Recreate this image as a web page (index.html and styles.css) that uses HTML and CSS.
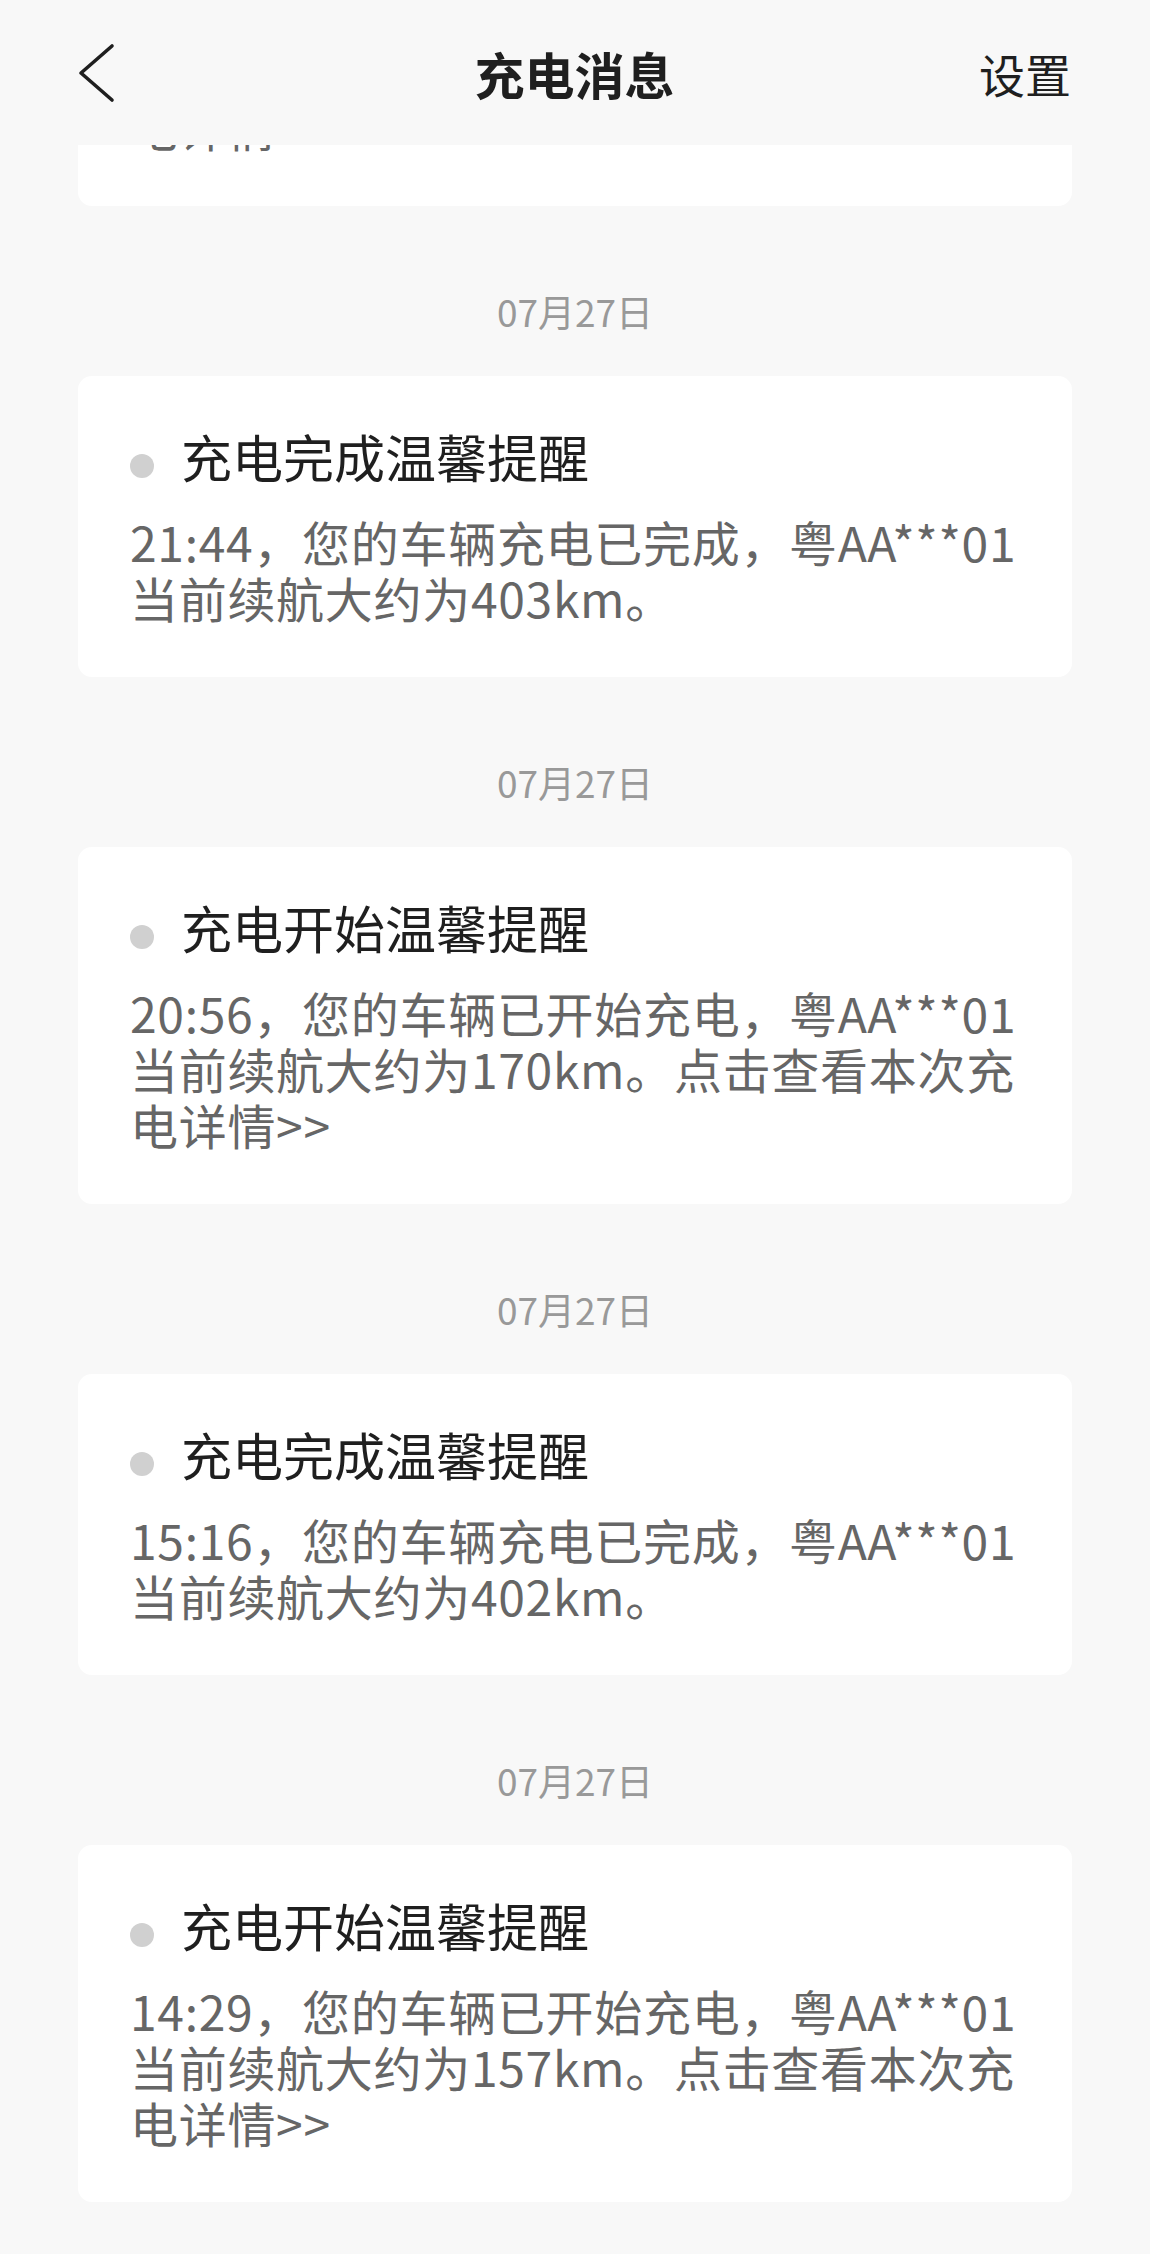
FILE: index.html
```html
<!DOCTYPE html>
<html>
<head>
    <meta charset="UTF-8">
    <meta name="viewport" content="width=device-width, initial-scale=1.0">
    <title>充电消息</title>
    <link rel="stylesheet" href="styles.css">
</head>
<body>
    <header class="topbar">
        <div class="back">
            <svg width="40" height="60" viewBox="0 0 40 60">
                <path d="M34 3 L3 30 L34 57" fill="none" stroke="#1f1f1f" stroke-width="3.6" stroke-linecap="round" stroke-linejoin="round"/>
            </svg>
        </div>
        <h1 class="title">充电消息</h1>
        <div class="action">设置</div>
    </header>

    <main class="list">
        <div class="card">
            <div class="card-title"><span class="dot"></span>充电开始温馨提醒</div>
            <p class="card-text">21:02，您的车辆已开始充电，粤AA***01当前续航大约为150km。点击查看本次充电详情&gt;&gt;</p>
        </div>

        <div class="date">07月27日</div>
        <div class="card">
            <div class="card-title"><span class="dot"></span>充电完成温馨提醒</div>
            <p class="card-text">21:44，您的车辆充电已完成，粤AA***01当前续航大约为403km。</p>
        </div>

        <div class="date">07月27日</div>
        <div class="card">
            <div class="card-title"><span class="dot"></span>充电开始温馨提醒</div>
            <p class="card-text">20:56，您的车辆已开始充电，粤AA***01当前续航大约为170km。点击查看本次充电详情&gt;&gt;</p>
        </div>

        <div class="date">07月27日</div>
        <div class="card">
            <div class="card-title"><span class="dot"></span>充电完成温馨提醒</div>
            <p class="card-text">15:16，您的车辆充电已完成，粤AA***01当前续航大约为402km。</p>
        </div>

        <div class="date">07月27日</div>
        <div class="card">
            <div class="card-title"><span class="dot"></span>充电开始温馨提醒</div>
            <p class="card-text">14:29，您的车辆已开始充电，粤AA***01当前续航大约为157km。点击查看本次充电详情&gt;&gt;</p>
        </div>
    </main>
</body>
</html>
```

FILE: styles.css
```css
body {
    margin: 0;
    background: #f8f8f8;
    font-family: "Noto Sans CJK SC", "Noto Sans", sans-serif;
    color: #1f1f1f;
}

.topbar {
    position: fixed;
    top: 0;
    left: 0;
    right: 0;
    height: 145px;
    z-index: 10;
    display: grid;
    grid-template-columns: 1fr auto 1fr;
    align-items: center;
    padding: 0 79px 0 78px;
    background: #f8f8f8;
}

.back svg {
    display: block;
}

.title {
    margin: 0;
    font-size: 50px;
    font-weight: 700;
    line-height: 60px;
}

.action {
    justify-self: end;
    font-size: 46px;
    line-height: 60px;
}

/* list is scrolled: the first card is half under the bar */
.list {
    display: flex;
    flex-direction: column;
    margin-top: -151px;
    padding: 0 78px 40px 78px;
}

.card {
    background: #ffffff;
    border-radius: 14px;
    padding: 50px 52px 52px 52px;
}

.card-title {
    display: flex;
    align-items: center;
    font-size: 51px;
    line-height: 60px;
    color: #1f1f1f;
}

.dot {
    width: 24px;
    height: 24px;
    border-radius: 50%;
    background: #d0d0d0;
    margin: 20px 27px 0 0;
    flex-shrink: 0;
}

.card-text {
    margin: 27px 0 0 0;
    font-size: 48px;
    line-height: 56px;
    letter-spacing: 0.7px;
    color: #666666;
}

.date {
    margin: 83px 0 43px 0;
    text-align: center;
    font-size: 37px;
    line-height: 44px;
    color: #999999;
}
```
